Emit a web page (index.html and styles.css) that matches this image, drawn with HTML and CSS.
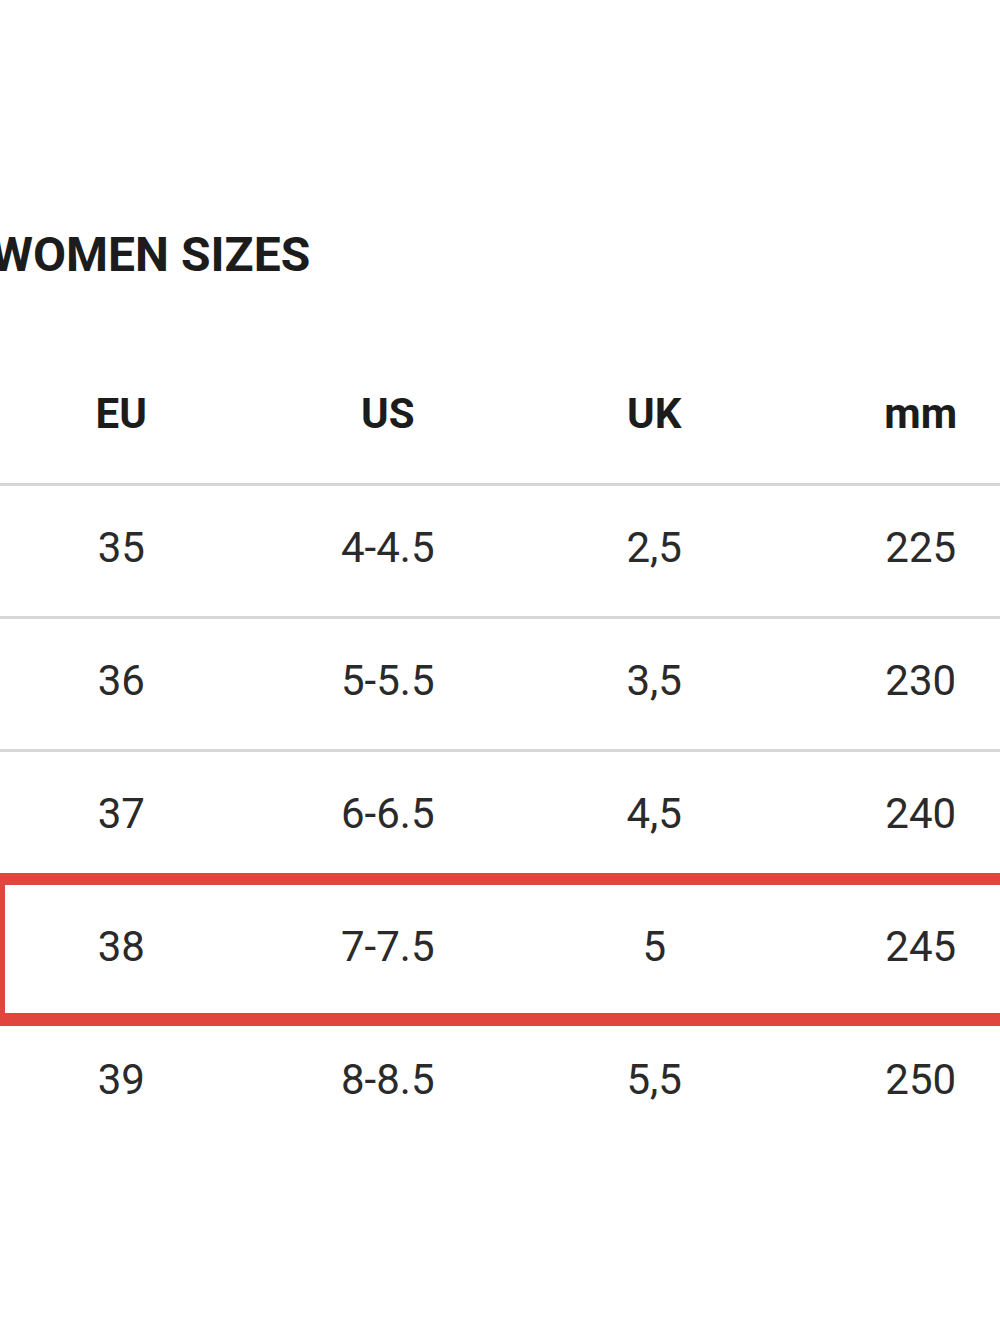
FILE: index.html
```html
<!DOCTYPE html>
<html lang="en">
<head>
<meta charset="utf-8">
<title>Women Sizes</title>
<link rel="stylesheet" href="styles.css">
</head>
<body>
<main class="page">
  <h1 class="title">WOMEN SIZES</h1>
  <div class="table">
    <div class="row head">
      <div class="cell">EU</div>
      <div class="cell">US</div>
      <div class="cell">UK</div>
      <div class="cell">mm</div>
    </div>
    <div class="row">
      <div class="cell">35</div>
      <div class="cell">4-4.5</div>
      <div class="cell">2,5</div>
      <div class="cell">225</div>
    </div>
    <div class="row">
      <div class="cell">36</div>
      <div class="cell">5-5.5</div>
      <div class="cell">3,5</div>
      <div class="cell">230</div>
    </div>
    <div class="row">
      <div class="cell">37</div>
      <div class="cell">6-6.5</div>
      <div class="cell">4,5</div>
      <div class="cell">240</div>
    </div>
    <div class="row highlighted">
      <div class="cell">38</div>
      <div class="cell">7-7.5</div>
      <div class="cell">5</div>
      <div class="cell">245</div>
      <span class="highlight-box"></span>
    </div>
    <div class="row last">
      <div class="cell">39</div>
      <div class="cell">8-8.5</div>
      <div class="cell">5,5</div>
      <div class="cell">250</div>
    </div>
  </div>
</main>
</body>
</html>
```
FILE: styles.css
```css
html, body {
  margin: 0;
  padding: 0;
  background: #ffffff;
}
body {
  width: 1000px;
  height: 1333px;
  overflow: hidden;
  font-family: Roboto, "Liberation Sans", sans-serif;
  color: #2a2a2a;
}
.page {
  padding-top: 231px;
}
.title {
  margin: 0 0 0 -9px;
  font-size: 48px;
  line-height: 48px;
  font-weight: 700;
  color: #1c1c1c;
  letter-spacing: 0;
}
.table {
  margin-top: 74px;
  margin-left: -12px;
  width: 1066px;
}
.row {
  display: grid;
  grid-template-columns: repeat(4, 1fr);
  align-items: center;
  height: 130px;
  padding-bottom: 6px;
  box-sizing: content-box;
  border-bottom: 3px solid #d6d6d6;
  position: relative;
}
.row:not(.head) {
  height: 124px;
}
.row.last {
  border-bottom: none;
}
.cell {
  text-align: center;
  font-size: 42px;
  line-height: 48px;
  font-weight: 400;
}
.head {
  height: 122px;
  padding-bottom: 8px;
}
.head .cell {
  font-weight: 700;
  color: #1c1c1c;
}
.highlight-box {
  position: absolute;
  left: 12px;
  right: 0;
  top: -12px;
  bottom: -11px;
  border: 12px solid #e1463e;
  border-bottom-width: 13px;
  border-left-width: 5px;
  border-right: none;
}
```
